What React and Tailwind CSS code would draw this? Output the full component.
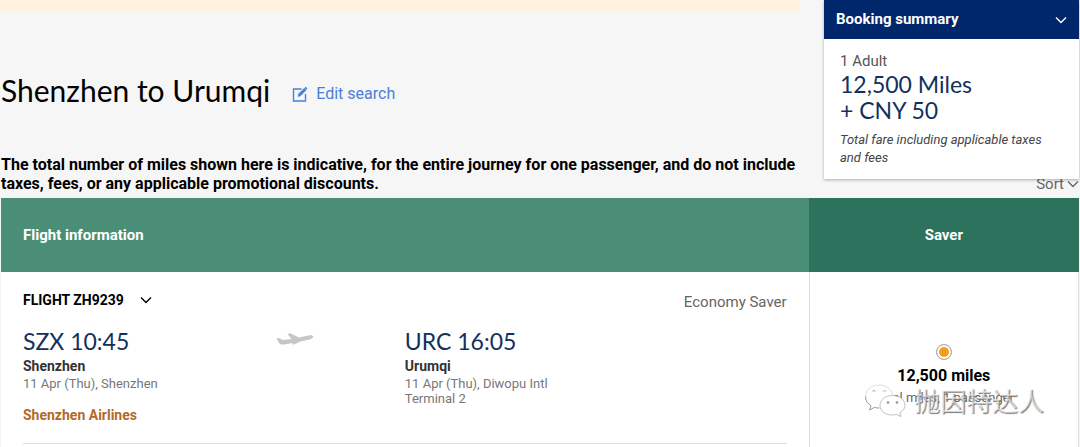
const Chevron = ({ className }) => (
  <svg viewBox="0 0 12 8" className={className} fill="none" stroke="currentColor" strokeWidth="1.4" aria-hidden="true">
    <path d="M1 1.5l5 5 5-5" />
  </svg>
)

const EditIcon = () => (
  <svg viewBox="0 0 16 16" className="w-4 h-4" fill="none" stroke="currentColor" aria-hidden="true">
    <path d="M9.5 3H1.500v12h12V8" strokeWidth="1.4" />
    <path d="M6 10.5l.7-2.700 5.600-5.600 1.900 1.900-5.600 5.600z" fill="currentColor" strokeWidth="0.6" />
    <path d="M13.2 1.3l1.7 1.7" strokeWidth="1.6" />
  </svg>
)

const Plane = () => (
  <svg viewBox="0 0 38 14" className="w-[38px] h-[14px] text-[#c6c6c6]" fill="currentColor" aria-hidden="true">
    <path d="M0.5 6.500L3 6l4 2 8.500-1-4-5L14 1.200 23 5.500l9.500-2c2.500-.4 4.500 0 4.700 1 .1 1.400-1.500 2.400-3.500 2.900L24.500 9.500 18.500 12.200l-2.700.3 1.200-1.500L8 12.500c-2.300.3-3.800-.1-4.700-1.300z" />
  </svg>
)

const WechatMark = () => (
  <svg viewBox="0 0 42 34" className="w-[42px] h-[34px]" fill="#fff" stroke="#a5a5a5" strokeWidth="0.7" aria-hidden="true">
    <path d="M15 2C7 2 1.500 7 1.500 13.500c0 4 2 7 5.500 9.200L5.500 27l5-2.600c1.500.4 3 .6 4.500.6 8 0 14-5 14-11.500S23 2 15 2z" stroke="#d0d0d0" />
    <path d="M1.500 13.500c0 4 2 7 5.500 9.200L5.500 27l5-2.600c1.500.4 3 .6 4.500.6" fill="none" stroke="#888" />
    <path d="M28.500 12.500C21 12.500 16 17 16 22.500S21 32 28.500 32c1.400 0 2.800-.2 4-.5l4.500 2-1.200-3.600c3-1.800 5.200-4.300 5.200-7.400 0-5.500-5-10-12.500-10z" />
    <path d="M8.500 8.500a1.700 1.700 0 0 1 3 0M19 8.500a1.700 1.700 0 0 1 3 0" fill="none" stroke="#777" />
    <circle cx="24" cy="19.500" r="1" fill="#777" />
    <circle cx="33" cy="19.500" r="1" fill="#777" />
  </svg>
)

const BookingSummary = () => {
  return (
    <aside className="absolute top-0 right-px w-[255px] bg-white shadow-[0_1px_3px_rgba(0,0,0,0.3)]">
      <button type="button" className="w-full h-[39px] px-3 flex items-center justify-between bg-[#00266b] text-white text-[15px] font-bold">
        Booking summary
        <Chevron className="w-3 h-2" />
      </button>
      <div className="px-4 pt-3 pb-3">
        <p className="text-[15px] leading-5 text-[#555]">1 Adult</p>
        <p className="font-['Lato',sans-serif] text-[23px] leading-[26px] text-[#12305f]">12,500 Miles<br />+ CNY 50</p>
        <p className="mt-2 pr-2 text-[13px] leading-[18px] italic text-[#444]">Total fare including applicable taxes and fees</p>
      </div>
    </aside>
  )
}

const Stop = ({ code, time, city, date, terminal, airline }) => {
  return (
    <div>
      <p className="font-['Lato',sans-serif] text-[23px] leading-[30px] text-[#12305f]">{code} {time}</p>
      <p className="text-sm leading-5 font-bold text-[#333]">{city}</p>
      <p className="text-[13px] leading-[15px] text-[#777]">{date}</p>
      {terminal && <p className="text-[13px] leading-[15px] text-[#777]">{terminal}</p>}
      {airline && <p className="mt-[14px] text-sm leading-5 font-bold text-[#b26a2a]">{airline}</p>}
    </div>
  )
}

const App = () => {
  return (
    <div className="relative min-h-screen bg-[#f6f6f6] font-['Roboto','Liberation_Sans',sans-serif] text-black">
      <div className="w-[74%] h-3 bg-[#fff3df]"></div>
      <header className="pt-[58px] pl-px flex items-center gap-[22px]">
        <h1 className="font-['Lato',sans-serif] text-[30px] leading-[40px]">Shenzhen to Urumqi</h1>
        <a href="#edit" className="pt-2 flex items-center gap-2 text-base text-[#4a7fd6]">
          <EditIcon />
          Edit search
        </a>
      </header>
      <div className="mt-[45px] px-px flex items-end justify-between">
        <p className="max-w-[824px] text-base leading-[19px] font-bold">
          The total number of miles shown here is indicative, for the entire journey for one passenger, and do not include taxes, fees, or any applicable promotional discounts.
        </p>
        <button type="button" className="flex items-center gap-[3px] text-[15px] leading-[18px] text-[#666]">
          Sort
          <Chevron className="w-3 h-2" />
        </button>
      </div>
      <div className="mt-[5px] px-px">
        <table className="w-full table-fixed bg-white">
          <thead>
            <tr className="h-[74px] text-white text-[15px]">
              <th className="w-3/4 px-[22px] text-left bg-[#4b8e77]">Flight information</th>
              <th className="w-1/4 text-center bg-[#2d725c]">Saver</th>
            </tr>
          </thead>
          <tbody>
            <tr className="align-top">
              <td className="px-[22px] pt-[18px] pb-1">
                <div className="border-b border-[#ddd]">
                  <div className="flex items-start justify-between">
                    <button type="button" className="flex items-center gap-4 text-sm leading-5 font-bold">
                      FLIGHT ZH9239
                      <Chevron className="w-3 h-2" />
                    </button>
                    <span className="text-[15px] leading-6 text-[#666]">Economy Saver</span>
                  </div>
                  <div className="pt-3 pb-[18px] grid grid-cols-2">
                    <div className="relative">
                      <Stop code="SZX" time="10:45" city="Shenzhen" date="11 Apr (Thu), Shenzhen" airline="Shenzhen Airlines" />
                      <div className="absolute right-[91px] top-[6px]">
                        <Plane />
                      </div>
                    </div>
                    <Stop code="URC" time="16:05" city="Urumqi" date="11 Apr (Thu), Diwopu Intl" terminal="Terminal 2" />
                  </div>
                </div>
              </td>
              <td className="pt-[72px] border-x border-[#ddd]">
                <label htmlFor="fare" className="flex flex-col items-center">
                  <input
                    type="radio" id="fare" name="fare" defaultChecked
                    className="appearance-none w-4 h-4 rounded-full border border-[#aaa] bg-[#f39c1f] shadow-[inset_0_0_0_2px_white]"
                  />
                  <span className="mt-1 text-base leading-6 font-bold">12,500 miles</span>
                  <span className="text-[13px] leading-5 text-[#666]">Total miles, 1 passenger</span>
                </label>
              </td>
            </tr>
          </tbody>
        </table>
      </div>
      <BookingSummary />
      <div className="absolute right-9 top-[382px] flex items-center gap-2">
        <WechatMark />
        <span className="font-['Noto_Sans_CJK_SC',sans-serif] text-[26px] leading-[36px] text-white/60 [text-shadow:1px_1px_1px_#777]">抛因特达人</span>
      </div>
    </div>
  )
}

export default App
